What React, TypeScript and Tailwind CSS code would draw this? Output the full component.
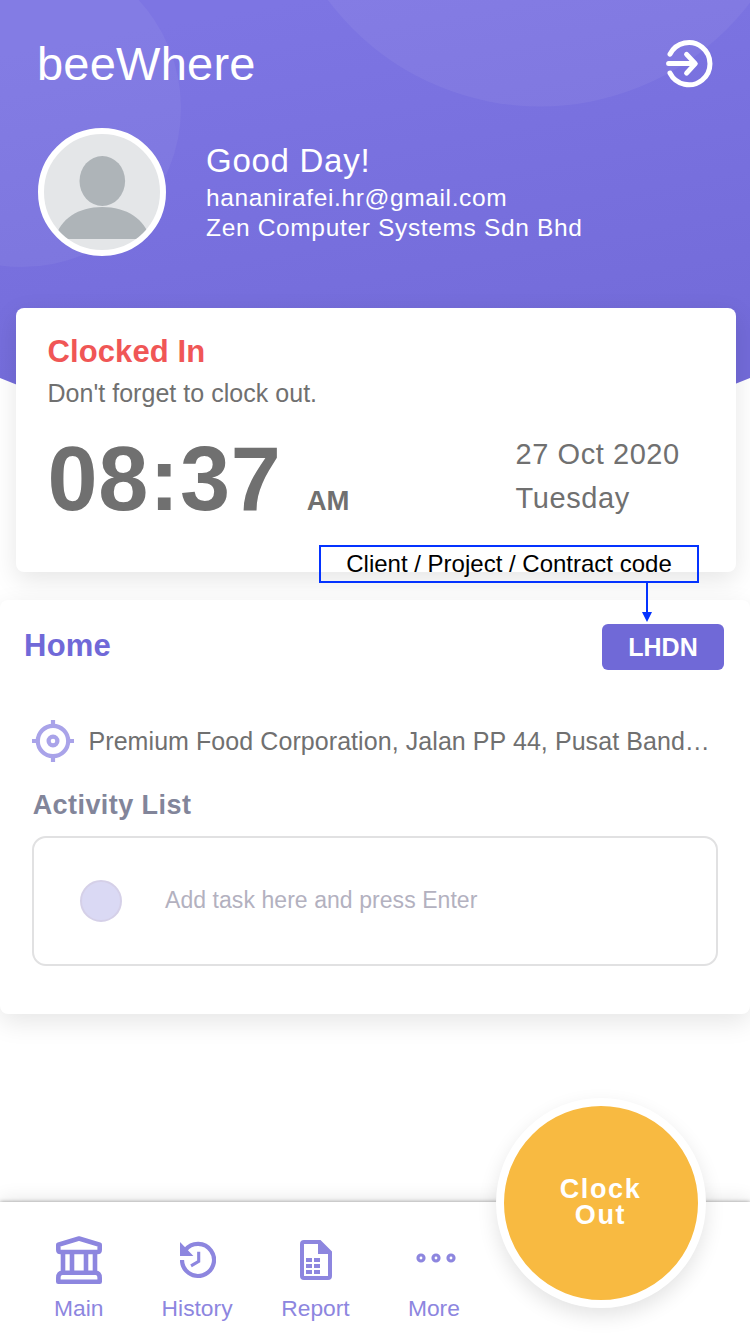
import type { ReactNode } from "react";

function HeaderBackdrop() {
  return (
    <svg className="absolute inset-x-0 top-0 h-[460px] w-full" viewBox="0 0 750 460" aria-hidden="true">
      <defs>
        <linearGradient id="sky" x1="300" y1="0" x2="372" y2="400" gradientUnits="userSpaceOnUse">
          <stop offset="0" stopColor="#7d75e3" />
          <stop offset="1" stopColor="#736bd9" />
        </linearGradient>
        <clipPath id="edge">
          <path d="M0 0H750V378L690 402H60L0 378Z" />
        </clipPath>
      </defs>
      <g clipPath="url(#edge)">
        <rect width="750" height="460" fill="url(#sky)" />
        <circle cx="22" cy="108" r="159" fill="#fff" fillOpacity=".05" />
        <circle cx="540" cy="-158" r="264.5" fill="#fff" fillOpacity=".055" />
      </g>
    </svg>
  );
}

function ExitIcon() {
  return (
    <svg className="size-[50px]" viewBox="0 0 50 50" fill="none" stroke="#fff" strokeWidth="5" strokeLinecap="round" strokeLinejoin="round">
      <path d="M6 15.2a21.1 21.1 0 1 1 0 18.9" />
      <path d="M4.6 24.6H31M22.6 15.4l8.7 9.2-8.7 9.5" />
    </svg>
  );
}

function Avatar() {
  return (
    <div className="size-32 shrink-0 overflow-hidden rounded-full border-6 border-white bg-[#e4e6e8]">
      <svg className="size-full" viewBox="44 134 116 116" fill="#aeb4b8">
        <ellipse cx="102.3" cy="181" rx="22.8" ry="25" />
        <path d="M55 239C60 219 78 207 102.3 207S145 219 150 239Z" />
      </svg>
    </div>
  );
}

function LocateIcon() {
  return (
    <svg className="size-[42px] shrink-0" viewBox="0 0 42 42" fill="none" stroke="#a9a3e9" strokeWidth="4.2">
      <circle cx="21" cy="21" r="15.2" />
      <circle cx="21" cy="21" r="4.4" />
      <path d="M21 0v6M21 36v6M0 21h6M36 21h6" />
    </svg>
  );
}

function BankIcon() {
  return (
    <svg className="h-12 w-[46px]" viewBox="0 0 46 48" fill="none" stroke="#8d86df" strokeWidth="4.6" strokeLinejoin="round">
      <path d="M2.3 8.8 23 2.5 43.7 8.8V13.8Q43.7 16 41.5 16H4.5Q2.3 16 2.3 13.8Z" />
      <path d="M7 16V37M16 16V37M30 16V37M39 16V37" />
      <path d="M6.5 36.8H39.5Q43.7 36.8 43.7 42V45.7H2.3V42Q2.3 36.8 6.5 36.8Z" />
    </svg>
  );
}

function HistoryIcon() {
  return (
    <svg className="h-12 w-9" viewBox="0 0 36 48" fill="none" stroke="#8d86df" strokeWidth="4.2">
      <path d="M2 24A16 16 0 1 0 5.3 14.2" />
      <path d="M0 6 13.4 20H0Z" fill="#8d86df" stroke="none" />
      <path d="M18.7 15.8V25.4L11 29.8" strokeWidth="3.1" />
    </svg>
  );
}

function ReportIcon() {
  return (
    <svg className="h-12 w-8" viewBox="0 0 32 48" fill="#8d86df">
      <path
        fillRule="evenodd"
        d="M4 4H20.5L32 15.5V40a4 4 0 0 1-4 4H4a4 4 0 0 1-4-4V8a4 4 0 0 1 4-4ZM4 8V40H28V18H18V8Z"
      />
      <path d="M6 22h6v4H6zM14 22h6v4h-6zM6 28h6v4H6zM14 28h6v4h-6zM6 34h6v4H6zM14 34h6v4h-6z" />
    </svg>
  );
}

function MoreIcon() {
  return (
    <svg className="ml-1 h-12 w-10" viewBox="0 0 40 48" fill="none" stroke="#8d86df" strokeWidth="3.2">
      <circle cx="5" cy="22" r="3" />
      <circle cx="20" cy="22" r="3" />
      <circle cx="35" cy="22" r="3" />
    </svg>
  );
}

function NavItem({ label, children }: { label: string; children: ReactNode }) {
  return (
    <a className="flex w-[118.4px] flex-col items-center pt-[34px] text-[#8d86df]">
      {children}
      <span className="mt-2.5 mr-px text-[22.8px] leading-7">{label}</span>
    </a>
  );
}

export default function App() {
  return (
    <div className="relative flex h-[1334px] w-[750px] flex-col overflow-hidden bg-white font-['Liberation_Sans',Arial,sans-serif]">
      <HeaderBackdrop />

      <header className="relative h-[308px] shrink-0 text-white">
        <div className="flex items-start justify-between pt-[39px] pr-[36px] pl-[37px]">
          <h1 className="text-[47px] leading-[50px] tracking-[0.23px]">beeWhere</h1>
          <ExitIcon />
        </div>
        <div className="mt-[39px] flex pl-[38px]">
          <Avatar />
          <div className="pt-3 pl-10">
            <p className="text-[33px] leading-[42px] tracking-[0.73px]">Good Day!</p>
            <p className="mt-px text-[24.5px] leading-[30px] tracking-[0.62px]">hananirafei.hr@gmail.com</p>
            <p className="text-[24.5px] leading-[30px] tracking-[0.66px]">Zen Computer Systems Sdn Bhd</p>
          </div>
        </div>
      </header>

      <section className="relative mr-[14px] ml-4 h-[264px] shrink-0 rounded-lg bg-white pt-[25px] pl-[31.5px] text-[#707070] shadow-[0_8px_26px_rgba(0,0,0,0.1)]">
        <h2 className="text-[31px] leading-[38px] font-bold tracking-[0.1px] text-[#f05656]">Clocked In</h2>
        <p className="mt-[7px] text-[25px] leading-[30px] tracking-[0.03px]">Don't forget to clock out.</p>
        <div className="mt-6 flex">
          <div className="mt-0.5 flex w-[468px] items-baseline font-bold">
            <span className="text-[90px] leading-[90px] tracking-[0.8px]">08:37</span>
            <span className="ml-[25px] text-[27.5px]">AM</span>
          </div>
          <div className="text-[29px] leading-11">
            <p className="tracking-[0.57px]">27 Oct 2020</p>
            <p className="tracking-[0.6px]">Tuesday</p>
          </div>
        </div>
      </section>

      <section className="relative mt-7 h-[414px] shrink-0 rounded-lg bg-white pt-6 shadow-[0_8px_26px_rgba(0,0,0,0.1)]">
        <div className="flex items-start justify-between pr-[26px] pl-6">
          <h2 className="pt-px text-[31px] leading-[42px] font-bold tracking-[0.24px] text-[#7069d8]">Home</h2>
          <span className="h-[46px] w-[122px] rounded-[6px] bg-[#7069d7] text-center text-[25px] leading-[46px] font-bold text-white">
            LHDN
          </span>
        </div>
        <div className="mt-[50px] flex items-center pl-8">
          <LocateIcon />
          <p className="ml-[14.5px] text-[25px] leading-[42px] tracking-[0.07px] whitespace-nowrap text-[#707070]">
            Premium Food Corporation, Jalan PP 44, Pusat Band…
          </p>
        </div>
        <h3 className="mt-[25px] pl-[32.7px] text-[27px] leading-9 font-bold tracking-[0.43px] text-[#82859a]">Activity List</h3>
        <div className="mt-[13px] ml-8 flex h-[130px] w-[686px] items-center rounded-[14px] border-2 border-[#e1e1e2] pl-[46px]">
          <span className="size-[42px] rounded-full border-2 border-[#d5d0e8] bg-[#dad9f4]" />
          <span className="mb-px ml-[43px] text-[23px] tracking-[0.06px] text-[#b3b1bf]">Add task here and press Enter</span>
        </div>
      </section>

      <nav className="relative mt-auto flex h-[132px] shrink-0 bg-white pl-5 shadow-[0_0_4px_rgba(0,0,0,0.4),0_-3px_18px_rgba(0,0,0,0.09)]">
        <NavItem label="Main">
          <BankIcon />
        </NavItem>
        <NavItem label="History">
          <HistoryIcon />
        </NavItem>
        <NavItem label="Report">
          <ReportIcon />
        </NavItem>
        <NavItem label="More">
          <MoreIcon />
        </NavItem>
        <button className="absolute top-[-104px] left-[496px] flex size-[210px] items-center justify-center rounded-full border-8 border-white bg-[#f8ba41] pr-px pb-0.5 text-center text-[27px] leading-[26px] font-bold tracking-[1.6px] text-white shadow-[0_8px_20px_rgba(0,0,0,0.11)]">
          Clock
          <br />
          Out
        </button>
      </nav>

      <div className="absolute top-[545px] left-[319px] h-[38px] w-[380px] border-2 border-[#0433ff] text-center text-[24px] leading-[34px] text-black">
        Client / Project / Contract code
      </div>
      <svg className="absolute top-[583px] left-[642px] h-[39px] w-2.5" viewBox="0 0 10 39" fill="#0433ff">
        <path d="M4 0H6V29H10L5 39 0 29H4Z" />
      </svg>
    </div>
  );
}
